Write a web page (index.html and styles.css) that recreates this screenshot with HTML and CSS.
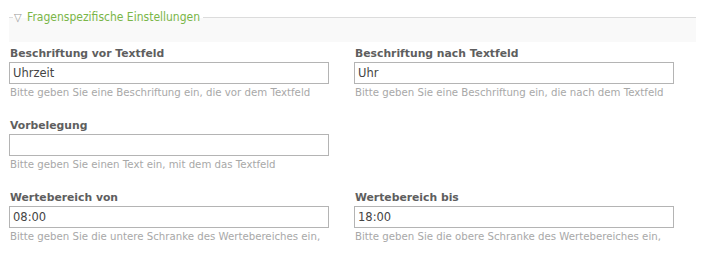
FILE: index.html
```html
<!DOCTYPE html>
<html lang="de">

<head>
    <meta charset="UTF-8">
    <title>Fragenspezifische Einstellungen</title>
    <link rel="stylesheet" href="styles.css">
</head>

<body>
    <fieldset class="einstellungen">
        <legend><span class="pfeil">&#9661;</span> Fragenspezifische Einstellungen</legend>

        <div class="raster">
            <div class="feld">
                <label for="vor">Beschriftung vor Textfeld</label>
                <input type="text" id="vor" value="Uhrzeit">
                <p class="hilfe">Bitte geben Sie eine Beschriftung ein, die vor dem Textfeld</p>
            </div>
            <div class="feld">
                <label for="nach">Beschriftung nach Textfeld</label>
                <input type="text" id="nach" value="Uhr">
                <p class="hilfe">Bitte geben Sie eine Beschriftung ein, die nach dem Textfeld</p>
            </div>

            <div class="feld">
                <label for="vorbelegung">Vorbelegung</label>
                <input type="text" id="vorbelegung" value="">
                <p class="hilfe">Bitte geben Sie einen Text ein, mit dem das Textfeld</p>
            </div>
            <div class="feld"></div>

            <div class="feld">
                <label for="von">Wertebereich von</label>
                <input type="text" id="von" value="08:00">
                <p class="hilfe">Bitte geben Sie die untere Schranke des Wertebereiches ein,</p>
            </div>
            <div class="feld">
                <label for="bis">Wertebereich bis</label>
                <input type="text" id="bis" value="18:00">
                <p class="hilfe">Bitte geben Sie die obere Schranke des Wertebereiches ein,</p>
            </div>
        </div>
    </fieldset>
</body>

</html>
```

FILE: styles.css
```css
body {
    font-family: "DejaVu Sans", Verdana, sans-serif;
    background-color: #fff;
    margin: 0;
    padding: 0;
}

.einstellungen {
    margin: 10px 0 0 9px;
    width: 687px;
    box-sizing: border-box;
    border: none;
    border-top: 1px solid #dcdcdc;
    padding: 0;
    background: linear-gradient(#f9f9f9 0, #f9f9f9 24px, #fff 24px);
}

.einstellungen legend {
    margin-left: 4px;
    padding: 0 3px 0 1px;
    font-family: "DejaVu Sans Condensed", "DejaVu Sans", sans-serif;
    font-stretch: condensed;
    font-size: 12px;
    color: #7ab648;
}

.pfeil {
    color: #999;
    font-size: 11px;
    margin-right: 2px;
}

.raster {
    display: grid;
    grid-template-columns: 320px 320px;
    column-gap: 25px;
    padding-top: 23px;
}

.feld {
    height: 72px;
}

label {
    display: block;
    margin-left: 1px;
    font-size: 10.8px;
    font-weight: bold;
    color: #5e5e5e;
    line-height: 14px;
}

input[type="text"] {
    display: block;
    width: 320px;
    height: 22px;
    box-sizing: border-box;
    margin: 1px 0 0 0;
    padding: 0 3px;
    border: 1px solid #b4b4b4;
    font-family: "DejaVu Sans", Verdana, sans-serif;
    font-size: 11.5px;
    color: #444;
}

.hilfe {
    margin: 3px 0 0 1px;
    font-size: 10.2px;
    color: #a8a8a8;
}
```
